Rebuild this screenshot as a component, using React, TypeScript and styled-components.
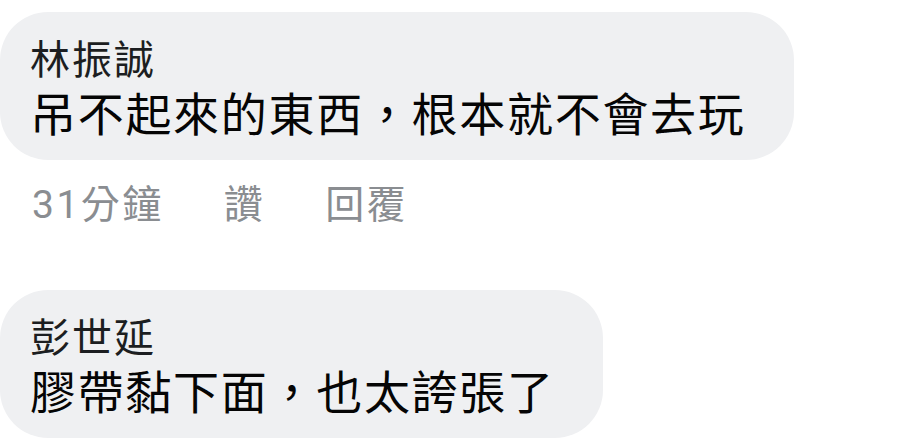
import React from "react";
import styled, { createGlobalStyle } from "styled-components";

const GlobalStyle = createGlobalStyle`
  html, body {
    margin: 0;
    padding: 0;
    background: #ffffff;
  }

  body {
    font-family: "Noto Sans CJK TC", "Noto Sans", sans-serif;
    overflow: hidden;
  }
`;

const CommentList = styled.div`
  display: flex;
  flex-direction: column;
  align-items: flex-start;
  gap: 62px;
  padding-top: 12px;
  width: 898px;
  height: 443px;
  box-sizing: border-box;
`;

const CommentItem = styled.div`
  display: flex;
  flex-direction: column;
  align-items: flex-start;
`;

const Bubble = styled.div`
  background: #eff0f2;
  border-radius: 48px;
  padding: 22px 48px 18px 30px;
  box-sizing: border-box;
  height: 148px;
`;

const AuthorName = styled.div`
  font-size: 40px;
  line-height: 46px;
  letter-spacing: 2px;
  color: #1c1e21;
  white-space: nowrap;
`;

const CommentText = styled.div`
  font-size: 46px;
  line-height: 62px;
  letter-spacing: 1.7px;
  color: #050505;
  white-space: nowrap;
`;

const ActionRow = styled.div`
  display: flex;
  align-items: center;
  gap: 60px;
  margin-top: 22px;
  padding-left: 32px;
  font-family: Roboto, "Noto Sans CJK TC", sans-serif;
  font-size: 39px;
  line-height: 46px;
  letter-spacing: 2.5px;
  color: #8a8d91;
`;

const ActionLink = styled.span`
  cursor: pointer;
  white-space: nowrap;
`;

interface CommentData {
  name: string;
  text: string;
  time?: string;
}

const comments: CommentData[] = [
  { name: "林振誠", text: "吊不起來的東西，根本就不會去玩", time: "31分鐘" },
  { name: "彭世延", text: "膠帶黏下面，也太誇張了" },
];

const App: React.FC = () => {
  return (
    <>
      <GlobalStyle />
      <CommentList>
        {comments.map((c) => (
          <CommentItem key={c.name}>
            <Bubble>
              <AuthorName>{c.name}</AuthorName>
              <CommentText>{c.text}</CommentText>
            </Bubble>
            {c.time && (
              <ActionRow>
                <ActionLink>{c.time}</ActionLink>
                <ActionLink>讚</ActionLink>
                <ActionLink>回覆</ActionLink>
              </ActionRow>
            )}
          </CommentItem>
        ))}
      </CommentList>
    </>
  );
};

export default App;
